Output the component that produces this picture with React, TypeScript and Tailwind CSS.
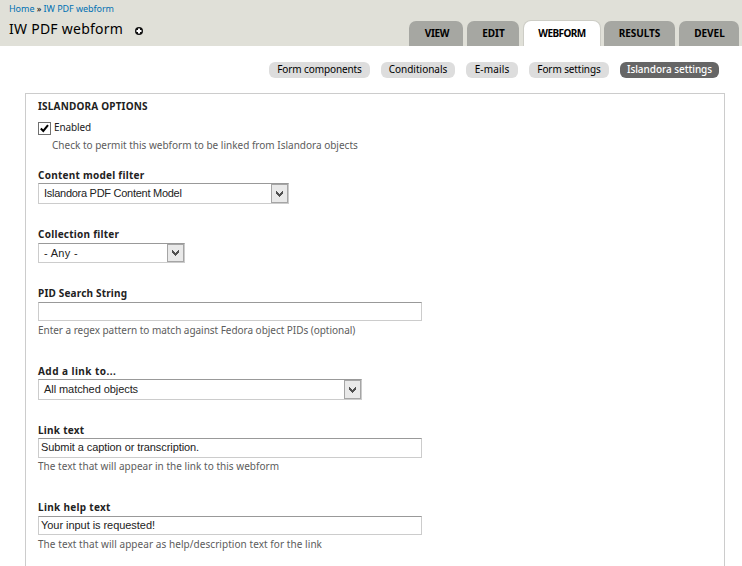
import type { ReactNode } from 'react';

const tabs = [
  { label: 'VIEW', box: 'w-[54px] mr-1 pl-[2px]', text: 'tracking-[-0.35px]' },
  { label: 'EDIT', box: 'w-[52px] mr-[5px] pl-[1px]', text: 'tracking-[-0.05px]' },
  { label: 'WEBFORM', box: 'w-[76px] mr-1', text: 'tracking-[-0.55px]', active: true },
  { label: 'RESULTS', box: 'w-[71px] mr-1', text: 'tracking-[-0.05px]' },
  { label: 'DEVEL', box: 'w-[60px] pl-[1px]', text: 'tracking-[0px]' },
];

const pills = [
  { label: 'Form components', box: 'w-[101px] tracking-[-0.1px]' },
  { label: 'Conditionals', box: 'w-[74px]' },
  { label: 'E-mails', box: 'w-[52px] tracking-[0.15px]' },
  { label: 'Form settings', box: 'w-[80px] tracking-[-0.1px]' },
  { label: 'Islandora settings', box: 'w-[99px] tracking-[-0.05px]', active: true },
];

function Label({ children, track = 'tracking-[0.25px]' }: { children: ReactNode; track?: string }) {
  return <div className={`h-[14px] whitespace-nowrap text-[10px] leading-[14px] font-bold text-[#222] ${track}`}>{children}</div>;
}

function Hint({ children, track = '' }: { children: ReactNode; track?: string }) {
  return <div className={`h-[14px] whitespace-nowrap text-[10px] leading-[14px] text-[#5c5c5c] ${track}`}>{children}</div>;
}

function Select({ value, box, track = '' }: { value: string; box: string; track?: string }) {
  return (
    <div className={`flex border border-[#ccc] border-t-[#999] bg-white ${box}`}>
      <span className={`grow pl-[5px] font-['Liberation_Sans',sans-serif] text-[11px] leading-[18px] whitespace-nowrap text-[#222] ${track}`}>{value}</span>
      <span className="flex w-[17px] shrink-0 items-center justify-center border border-[#a5a5a5] bg-[#e9e9e9]">
        <svg width="7" height="6" viewBox="0 0 7 6" fill="#505050" shapeRendering="crispEdges">
          <path d="M0 0H1V1H2V2H3V3H4V2H5V1H6V0H7V3H6V4H5V5H4V6H3V5H2V4H1V3H0Z" />
        </svg>
      </span>
    </div>
  );
}

function Input({ value, box, track = '' }: { value: string; box: string; track?: string }) {
  return (
    <div className={`w-[384px] border border-[#ccc] border-t-[#999] bg-white pl-[2px] font-['Liberation_Sans',sans-serif] text-[11px] leading-[17px] whitespace-nowrap text-[#222] ${box} ${track}`}>
      {value}
    </div>
  );
}

export default function App() {
  return (
    <div className="h-[566px] w-[742px] overflow-hidden bg-white font-['Noto_Sans',sans-serif] text-black">
      <header className="flex h-[46px] justify-between bg-[#e0e0d8]">
        <div className="pt-[2px] pl-[9px]">
          <div className="h-[14px] text-[9px] leading-[14px] tracking-[-0.05px] whitespace-nowrap text-[#0071b3]">
            Home <span className="text-black">»</span> IW PDF webform
          </div>
          <div className="flex h-[26px] items-center">
            <h1 className="w-[126px] text-[14px] leading-[26px] tracking-[0.25px] whitespace-nowrap">IW PDF webform</h1>
            <svg className="mt-[3px]" width="8" height="8" viewBox="0 0 8 8">
              <circle cx="4" cy="4" r="4" fill="#111" />
              <path d="M3 1.5H5V3H6.5V5H5V6.5H3V5H1.5V3H3Z" fill="#fff" />
            </svg>
          </div>
        </div>
        <nav className="flex pt-[21px] pr-[3px]">
          {tabs.map((t) => (
            <div
              key={t.label}
              className={`flex h-[25px] justify-center rounded-t-[7px] text-[10px] leading-[25px] font-bold ${t.box} ${t.text} ${t.active ? 'bg-white shadow-[0_0_0_1px_#cdcdc6]' : 'bg-[#a6a7a2]'}`}
            >
              {t.label}
            </div>
          ))}
        </nav>
      </header>
      <main className="relative bg-white">
        <nav className="flex justify-end gap-[11px] pt-4 pr-[23px]">
          {pills.map((p) => (
            <div
              key={p.label}
              className={`flex h-4 justify-center rounded-[6px] text-[10px] leading-[15px] whitespace-nowrap ${p.box} ${p.active ? 'bg-[#666] font-medium text-white' : 'bg-[#ddd]'}`}
            >
              {p.label}
            </div>
          ))}
        </nav>
        <fieldset className="mt-[15px] ml-[25px] h-[500px] w-[700px] border border-[#ccc] pt-[5px] pl-[12px]">
          <Label track="tracking-[0.18px]">ISLANDORA OPTIONS</Label>
          <div className="mt-[7px] flex h-[14px] items-center">
            <span className="mt-[2px] flex size-[13px] items-center justify-center border border-[#707070] bg-white">
              <svg width="9" height="9" viewBox="0 0 9 9" fill="none" stroke="#000" strokeWidth="2">
                <path d="M0.8 4.5L3.3 7L8 1.2" />
              </svg>
            </span>
            <span className="ml-[3px] text-[10px] leading-[14px] tracking-[-0.1px] text-[#222]">Enabled</span>
          </div>
          <div className="mt-[4px] pl-[14px]">
            <Hint>Check to permit this webform to be linked from Islandora objects</Hint>
          </div>
          <div className="mt-[16px]">
            <Label>Content model filter</Label>
            <Select value="Islandora PDF Content Model" box="mt-[1px] h-[21px] w-[251px]" track="tracking-[-0.27px]" />
          </div>
          <div className="mt-[23px]">
            <Label>Collection filter</Label>
            <Select value="- Any -" box="mt-[2px] h-[20px] w-[147px]" track="tracking-[0.3px]" />
          </div>
          <div className="mt-[23px]">
            <Label track="tracking-[0.18px]">PID Search String</Label>
            <Input value="" box="mt-[2px] h-[19px]" />
            <div className="mt-[2px]"><Hint track="tracking-[-0.035px]">Enter a regex pattern to match against Fedora object PIDs (optional)</Hint></div>
          </div>
          <div className="mt-[27px]">
            <Label track="tracking-[0.45px]">Add a link to...</Label>
            <Select value="All matched objects" box="mt-[1px] h-[21px] w-[324px]" track="tracking-[-0.07px]" />
          </div>
          <div className="mt-[23px]">
            <Label>Link text</Label>
            <Input value="Submit a caption or transcription." box="mt-[1px] h-[20px]" track="tracking-[-0.08px]" />
            <div className="mt-[1px]"><Hint track="tracking-[0.03px]">The text that will appear in the link to this webform</Hint></div>
          </div>
          <div className="mt-[27px]">
            <Label track="tracking-[0.3px]">Link help text</Label>
            <Input value="Your input is requested!" box="mt-[2px] h-[19px]" track="tracking-[-0.05px]" />
            <div className="mt-[2px]"><Hint track="tracking-[0.06px]">The text that will appear as help/description text for the link</Hint></div>
          </div>
        </fieldset>
      </main>
    </div>
  );
}
